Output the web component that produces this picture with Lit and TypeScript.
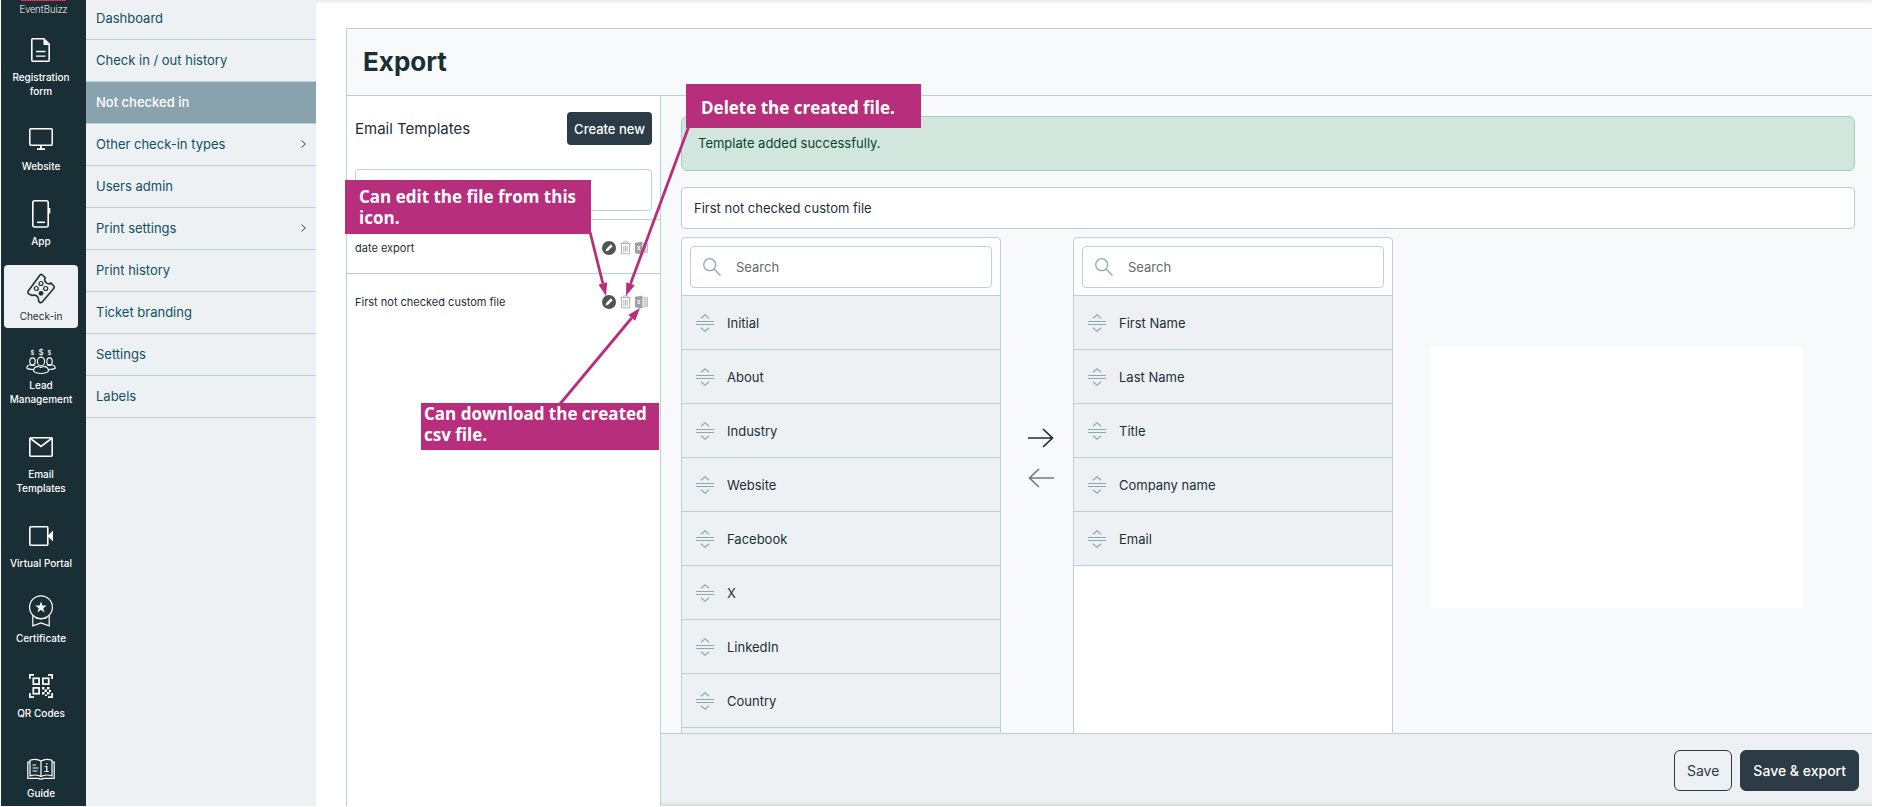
import { LitElement, html, css, svg, nothing } from "lit";
import { customElement, property } from "lit/decorators.js";
import { classMap } from "lit/directives/class-map.js";

const icons: Record<string, unknown> = {
  form: html`<svg width="20" height="24" viewBox="0 0 20 24" fill="none" stroke="currentColor" stroke-width="1.6">
    <path d="M1.8 .8h11l5.400 5.400v16a1 1 0 0 1-1 1H1.800a1 1 0 0 1-1-1V1.800a1 1 0 0 1 1-1z"/>
    <path d="M12.500 1v6H18z" fill="currentColor" stroke="none"/>
    <path d="M5 13.500h9.500M5 18.200h9.500" stroke-width="1.300"/></svg>`,
  website: html`<svg width="24" height="22" viewBox="0 0 24 22" fill="none" stroke="currentColor" stroke-width="1.500">
    <rect x=".8" y=".8" width="22.400" height="16.400" rx="1"/>
    <path d="M12 17v4M8 21.200h8" stroke-width="1.800"/></svg>`,
  app: html`<svg width="20" height="28" viewBox="0 0 20 28" fill="none" stroke="currentColor" stroke-width="1.600">
    <rect x="1.800" y=".8" width="15.400" height="26.200" rx="2"/>
    <path d="M6 22.300h8"/><path d="M18.500 8v5.500"/></svg>`,
  checkin: html`<svg width="30" height="32" viewBox="0 0 30 32" fill="none" stroke="currentColor" stroke-width="1.600" stroke-linejoin="round">
    <path d="M16.200 1.800l3 3a3.600 3.600 0 0 0 .8 4.600 3.600 3.600 0 0 0 5 .6l3 3.200c.5 1 .2 1.800-.5 2.500l-11.300 13.200c-.9.900-2 1-2.800.2l-1-1.300c.5-2-.2-3.600-1.500-4.600-1.500-1.200-3-1.400-4.900-.8L2.500 20.800c-.8-1-.8-2-.2-2.800L14 2c.7-.7 1.500-.8 2.200-.2z"/>
    <g stroke-width="1.200"><circle cx="15" cy="10.500" r="2"/><circle cx="10.300" cy="15.500" r="2"/><circle cx="19.700" cy="15.500" r="2"/></g>
    <circle cx="15" cy="20.300" r="2.400" fill="currentColor" stroke="none"/></svg>`,
  lead: html`<svg width="30" height="28" viewBox="0 0 30 28" fill="none" stroke="currentColor" stroke-width="1.100">
    <ellipse cx="15" cy="14.500" rx="3.600" ry="4.400"/>
    <path d="M7.500 24.200c0-3 2.500-4.500 4.500-4.800 1.800 1.200 4.200 1.200 6 0 2 .3 4.500 1.800 4.500 4.800-2.500 3-12.500 3-15 0z"/>
    <ellipse cx="6.500" cy="14.500" rx="2.700" ry="3.600"/><ellipse cx="23.500" cy="14.500" rx="2.700" ry="3.600"/>
    <path d="M7.500 22.500c-2.500 0-5.500-.2-6.800-1.500.3-2 2-3 4-3.200 1.500.6 3 .6 4.300 0M22.500 22.500c2.500 0 5.500-.2 6.800-1.500-.3-2-2-3-4-3.200-1.500.6-3 .6-4.300 0"/>
    <g fill="currentColor" stroke="none" text-anchor="middle" font-family="Inter, sans-serif">
      <text x="15" y="7.500" font-size="8">$</text><text x="6.500" y="7.500" font-size="6">$</text><text x="23.500" y="7.500" font-size="6">$</text></g></svg>`,
  email: html`<svg width="24" height="20" viewBox="0 0 24 20" fill="none" stroke="currentColor" stroke-width="1.600">
    <rect x=".8" y=".8" width="22.400" height="18.400" rx="1"/><path d="M1.500 1.500L12 9.500 22.500 1.500"/></svg>`,
  portal: html`<svg width="24" height="20" viewBox="0 0 24 20" fill="none" stroke="currentColor" stroke-width="1.600">
    <rect x=".8" y=".8" width="18" height="18.400" rx="1"/><path d="M18.500 10L24 4.500v11z" fill="currentColor" stroke="none"/></svg>`,
  certificate: html`<svg width="24" height="32" viewBox="0 0 24 32" fill="none" stroke="currentColor" stroke-width="1.200">
    <circle cx="12" cy="12.200" r="11.400"/><path d="M3.800 20.500v10.300L12 28l8.200 2.800V20.500"/><path d="M6 22.500c4 1.800 8 1.800 12 0"/>
    <path d="M12 6.500l1.400 4.100h4.300l-3.500 2.600 1.300 4.200-3.500-2.600-3.500 2.600 1.300-4.200-3.500-2.600h4.300z" fill="currentColor" stroke="none"/></svg>`,
  qr: html`<svg width="24" height="24" viewBox="0 0 24 24" fill="none" stroke="currentColor" stroke-width="1.700">
    <path d="M.9 5V.9H5M19 .9h4.100V5M.9 19v4.100H5M19 23.100h4.100V19"/>
    <rect x="4.300" y="4.300" width="5.800" height="5.800"/><rect x="13.900" y="4.300" width="5.800" height="5.800"/><rect x="4.300" y="13.900" width="5.800" height="5.800"/>
    <g fill="currentColor" stroke="none"><path d="M13 13h2.500v2.500H13zM18 13h2.500v2.500H18zM15.500 15.500H18V18h-2.500zM13 18h2.500v2.500H13zM18 18h2.500v2.500H18zM20 16h2v2h-2zM16 20.500h2v1.500h-2z"/></g></svg>`,
  guide: html`<svg width="28" height="26" viewBox="0 0 28 26" fill="none" stroke="currentColor" stroke-width="1.200">
    <path d="M14 5c-2.500-1.600-7.500-2-11-.8v15.600c3.500-1 8.500-.8 11 .8 2.500-1.600 7.500-1.800 11-.8V4.200C21.500 3 16.500 3.400 14 5zM14 5v15.600"/>
    <path d="M2.800 6.200H.8v16.200h10.600c.6 1 4.600 1 5.200 0h10.600V6.200h-2"/>
    <path d="M5.500 9h3.500M5.500 12h6M5.500 15h5"/>
    <path d="M17.500 10.500h2.300v5M17.300 15.500h4.500M19 7.800h1.500" /></svg>`,
};

const searchIcon = html`<svg width="18" height="18" viewBox="0 0 18 18" fill="none" stroke="#8aa9b4" stroke-width="1.300" aria-hidden="true">
  <circle cx="6.700" cy="6.700" r="6"/><path d="M11 11l6.500 6.500"/></svg>`;
const dragIcon = html`<svg width="18" height="18" viewBox="0 0 18 18" fill="none" stroke="#8aaab4" aria-hidden="true">
  <path d="M0 7.500h18M0 10.500h18"/><path d="M5 4.300L9 .8l4 3.500M5 13.700l4 3.500 4-3.500" stroke-width="1.200"/></svg>`;
const chevron = html`<svg width="5" height="8" viewBox="0 0 5 8" fill="none" stroke="currentColor" aria-hidden="true"><path d="M.5 .5L4.300 4 .5 7.500"/></svg>`;

const rail = [
  ["form", "Registration form"], ["website", "Website"], ["app", "App"], ["checkin", "Check-in"],
  ["lead", "Lead Management"], ["email", "Email Templates"], ["portal", "Virtual Portal"],
  ["certificate", "Certificate"], ["qr", "QR Codes"], ["guide", "Guide"],
];

@customElement("side-rail")
export class SideRail extends LitElement {
  static styles = css`
    :host { display: block; width: 85px; flex: none; background: #1a2e35; color: #fff; overflow: hidden; font: 500 10px/14px Inter, sans-serif; }
    .logo { display: block; height: 26px; text-align: center; color: inherit; text-decoration: none; font: 300 10px/18px Roboto, sans-serif; }
    .bar { display: block; width: 45px; height: 1px; margin: 0 auto; background: #d92b5c; }
    nav { display: flex; flex-direction: column; gap: 12px; padding: 0 8px 0 3px; }
    .item { display: flex; flex-direction: column; align-items: center; gap: 4px; padding: 8px 6px 5px; border-radius: 4px; color: inherit; text-decoration: none; text-align: center; }
    .icon { display: flex; align-items: center; height: 32px; }
    .lead .icon { height: 26px; }
    .guide .icon { height: 37px; align-items: flex-end; }
    .item.on { background: #edf1f4; color: #1f2f36; font-weight: 400; }
    svg { display: block; }
  `;
  render() {
    return html`<a class="logo" href="#"><span class="bar"></span>EventBuizz</a>
      <nav aria-label="Modules">${rail.map(([k, t]) => html`
        <a href="#" class="item ${k} ${k === "checkin" ? "on" : ""}"><span class="icon">${icons[k]}</span><span>${t}</span></a>`)}</nav>`;
  }
}

const menu: [string, boolean?][] = [
  ["Dashboard"], ["Check in / out history"], ["Not checked in"], ["Other check-in types", true], ["Users admin"],
  ["Print settings", true], ["Print history"], ["Ticket branding"], ["Settings"], ["Labels"],
];

@customElement("side-menu")
export class SideMenu extends LitElement {
  static styles = css`
    :host { display: block; width: 230px; flex: none; background: #edf1f4; overflow: hidden; font: 400 13px/20px Inter, sans-serif; }
    nav { display: flex; flex-direction: column; margin-top: -2px; }
    .link { display: flex; align-items: center; justify-content: space-between; height: 39px; padding: 0 10px 2px; border-bottom: 1px solid #bcd0d6; color: #12505f; text-decoration: none; }
    .link.on { background: #88a3ad; color: #fff; font-weight: 500; }
  `;
  render() {
    return html`<nav aria-label="Check-in">${menu.map(([t, sub]) => html`
      <a href="#" class=${classMap({ link: true, on: t === "Not checked in" })}>${t}${sub ? chevron : nothing}</a>`)}</nav>`;
  }
}

@customElement("field-list")
export class FieldList extends LitElement {
  @property({ attribute: false }) items: string[] = [];
  @property() name = "";
  static styles = css`
    :host { display: block; border: 1px solid #bcd0d6; border-radius: 4px 4px 0 0; background: #fff; font: 400 13px/20px Inter, sans-serif; color: #1c2f37; }
    .search { display: flex; align-items: center; gap: 15px; margin: 8px 8px 7px; height: 40px; padding-left: 12px; border: 1px solid #bcd0d6; border-radius: 4px; }
    .search input { flex: 1; min-width: 0; border: 0; padding: 0; outline: 0; background: none; font: inherit; color: inherit; }
    .search input::placeholder { color: #62696d; }
    ul { margin: 0; padding: 0; list-style: none; }
    li { display: flex; align-items: center; gap: 13px; height: 53px; padding-left: 14px; border-top: 1px solid #bcd0d6; background: #edf1f4; }
    li.last { border-bottom: 1px solid #bcd0d6; }
  `;
  render() {
    return html`<label class="search">${searchIcon}<input type="search" placeholder="Search" aria-label=${"Search " + this.name} /></label>
      <ul>${this.items.map((t, i) => html`<li class=${i === this.items.length - 1 ? "last" : ""}>${dragIcon}<span>${t}</span></li>`)}</ul>`;
  }
}

const arrow = (d: string) => html`<svg width="26" height="20" viewBox="0 0 26 20" fill="none" stroke="currentColor" stroke-width="1.700" aria-hidden="true"><path d=${d}/></svg>`;

@customElement("app-root")
export class AppRoot extends LitElement {
  static styles = css`
    :host { display: block; font: 400 13px/20px Inter, sans-serif; color: #1c2f37; background: #fff; }
    * { box-sizing: border-box; }
    .shell { position: relative; display: flex; height: 100vh; padding: 0 6px 1px 1px; overflow: hidden; }
    .main { flex: 1; min-width: 0; display: flex; flex-direction: column; padding: 28px 0 0 30px; box-shadow: inset 0 4px 4px -3px #0002; }
    .panel { flex: 1; min-height: 0; display: flex; flex-direction: column; border: 1px solid #bcd0d6; border-width: 1px 0 0 1px; background: #f7f9fa; }
    h1 { margin: 0; padding: 0 16px; font: 700 26px/66px Inter, sans-serif; color: #1a2e35; border-bottom: 1px solid #bcd0d6; }
    .columns { flex: 1; min-height: 0; display: flex; }
    .templates { width: 314px; flex: none; background: #fff; border-right: 1px solid #bcd0d6; }
    .top { display: flex; align-items: center; justify-content: space-between; padding: 16px 8px 24px; }
    h2 { margin: 0; font: 400 15px/20px Inter, sans-serif; }
    button { font-family: inherit; cursor: pointer; }
    .new { height: 33px; padding: 0 7px; border: 0; border-radius: 4px; background: #2b3c46; color: #fff; font-size: 13px; font-weight: 500; }
    .find { display: block; width: 297px; height: 42px; margin: 0 8px 8px; padding: 0 12px; border: 1px solid #bcd0d6; border-radius: 4px; background: #fff; font: inherit; }
    .row { display: flex; align-items: center; gap: 4px; height: 54px; padding: 2px 12px 0 8px; border-top: 1px solid #bcd0d6; font-size: 11px; }
    .row span { flex: 1; }
    .row button { display: block; border: 0; padding: 0; background: none; }
    svg { display: block; }
    .editor { flex: 1; min-width: 0; display: flex; flex-direction: column; }
    .body { flex: 1; min-height: 0; overflow: hidden; padding: 20px 17px 0 20px; }
    .alert { padding: 16px; border: 1px solid #a3d0bb; border-radius: 6px; background: #d1e7dd; color: #0f4133; margin-bottom: 16px; line-height: 21px; }
    .name { display: block; width: 100%; height: 42px; padding: 0 12px; border: 1px solid #bcd0d6; border-radius: 4px; background: #fff; font: inherit; color: inherit; margin-bottom: 8px; }
    .lists { display: grid; grid-template-columns: 320fr 72fr 320fr 462fr; height: 100%; }
    .moves { display: flex; flex-direction: column; align-items: center; gap: 20px; padding: 191px 0 0 8px; }
    .moves button { border: 0; padding: 0; background: none; color: #1a2e35; }
    .moves button:disabled { color: #6d7d83; }
    .preview { height: 262px; margin: 109px 52px 0 37px; background: #fff; }
    .actions { display: flex; justify-content: flex-end; gap: 8px; padding: 16px 13px 15px; border-top: 1px solid #bcd0d6; background: #edf1f4; box-shadow: inset 0 -4px 4px -3px #0002; }
    .actions button { height: 41px; padding: 0 12px; border: 1px solid #2b3c46; border-radius: 6px; font-size: 14px; color: #2b3c46; background: none; }
    .actions .solid { background: #2b3c46; color: #fff; font-weight: 500; }
    .arrows { position: absolute; left: 0; top: 0; pointer-events: none; }
    .note { position: absolute; margin: 0; background: #b72e7c; color: #fff; font: 700 17px/21px "Open Sans", sans-serif; white-space: nowrap; }
    .edit { left: 345px; top: 180px; width: 246px; height: 54px; padding: 6px 0 0 14px; }
    .remove { left: 686px; top: 84px; width: 235px; height: 44px; padding: 13px 0 0 15px; }
    .download { left: 421px; top: 403px; width: 238px; height: 47px; padding: 0 0 0 3px; }
  `;

  private row(name: string) {
    return html`<div class="row"><span>${name}</span>
      <button aria-label=${"Edit " + name}><svg width="14" height="14" viewBox="0 0 14 14"><circle cx="7" cy="7" r="7" fill="#505254"/><path d="M3.500 10.500l.7-2.600L8.800 3.300l1.900 1.900-4.600 4.600z" fill="#fff"/></svg></button>
      <button aria-label=${"Delete " + name}><svg width="11" height="14" viewBox="0 0 11 14" fill="none" stroke="#b3b5b7"><path d="M.2 2.500h10.600M3.500 2.500v-1.600h4v1.600M1.500 2.500v10.300h8V2.500M3.800 4.800v6M5.500 4.800v6M7.200 4.800v6"/></svg></button>
      <button aria-label=${"Download " + name}><svg width="13" height="14" viewBox="0 0 13 14"><path d="M0 1.800L7.500 .8v12.600L0 12.300z" fill="#9d9fa2"/><path d="M2.300 4.800l2.800 4.500M5.100 4.800L2.300 9.300" stroke="#fff" fill="none"/><path d="M8 2.500h4.500v9.200H8M8 4.500h4.500M8 6.300h4.500M8 8.100h4.500M8 9.900h4.500M10.200 2.500v9" stroke="#b9bbbd" stroke-width=".9" fill="none"/></svg></button>
    </div>`;
  }

  private pointer(x1: number, y1: number, x2: number, y2: number) {
    const len = Math.hypot(x2 - x1, y2 - y1);
    const ux = (x2 - x1) / len;
    const uy = (y2 - y1) / len;
    const bx = x2 - ux * 13;
    const by = y2 - uy * 13;
    return svg`<path d="M${x1} ${y1}L${bx} ${by}" stroke="#b72e7c" stroke-width="2.800"/>
      <path d="M${x2} ${y2}L${bx - uy * 4.5} ${by + ux * 4.5}L${bx + uy * 4.5} ${by - ux * 4.5}z" fill="#b72e7c"/>`;
  }

  render() {
    return html`<div class="shell">
      <side-rail></side-rail>
      <side-menu></side-menu>
      <main class="main"><section class="panel">
        <h1>Export</h1>
        <div class="columns">
          <div class="templates">
            <div class="top"><h2>Email Templates</h2><button class="new">Create new</button></div>
            <input class="find" type="search" aria-label="Search templates" />
            ${this.row("date export")}${this.row("First not checked custom file")}
          </div>
          <div class="editor">
            <div class="body">
              <div class="alert" role="status">Template added successfully.</div>
              <input class="name" type="text" aria-label="Template name" value="First not checked custom file" />
              <div class="lists">
                <field-list name="available fields" .items=${["Initial", "About", "Industry", "Website", "Facebook", "X", "LinkedIn", "Country", ""]}></field-list>
                <div class="moves">
                  <button aria-label="Add field">${arrow("M0 10h24.500M15 1l9.500 9-9.500 9")}</button>
                  <button aria-label="Remove field" disabled>${arrow("M26 10H1.500M11 1L1.500 10 11 19")}</button>
                </div>
                <field-list name="selected fields" .items=${["First Name", "Last Name", "Title", "Company name", "Email"]}></field-list>
                <div class="preview"></div>
              </div>
            </div>
            <div class="actions"><button>Save</button><button class="solid">Save &amp; export</button></div>
          </div>
        </div>
      </section></main>
      <svg class="arrows" width="700" height="420" aria-hidden="true">
        ${this.pointer(590, 232, 606, 296)}${this.pointer(689, 126, 626, 296)}${this.pointer(560, 404, 640, 308)}
      </svg>
      <p class="note edit">Can edit the file from this<br />icon.</p>
      <p class="note remove">Delete the created file.</p>
      <p class="note download">Can download the created<br />csv file.</p>
    </div>`;
  }
}
